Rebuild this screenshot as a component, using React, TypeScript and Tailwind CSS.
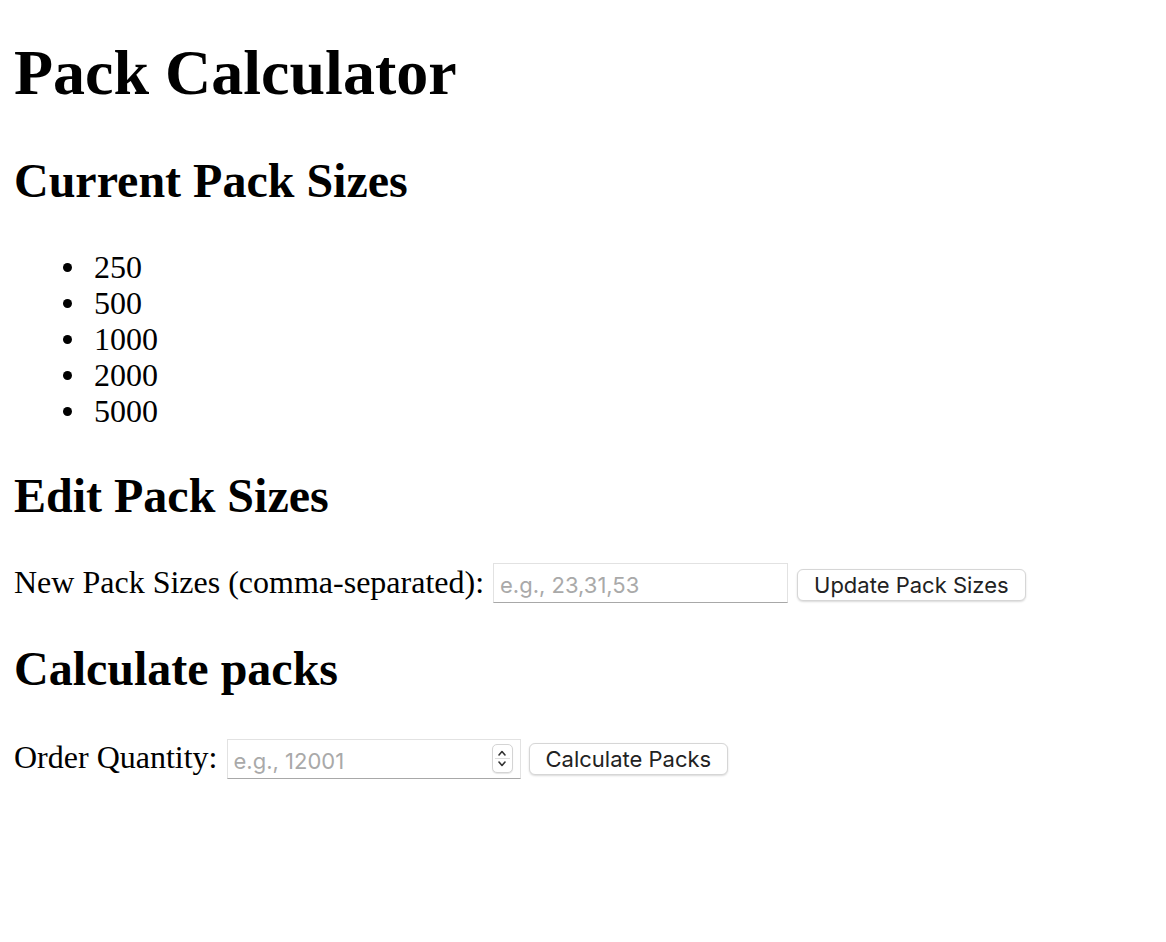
import React from "react";

const serif = { fontFamily: '"Liberation Serif", "Times New Roman", serif' };
const sans = { fontFamily: "Inter, 'Liberation Sans', sans-serif" };

function Spinner() {
  return (
    <div className="absolute right-[8px] top-[5px] flex h-[29px] w-[21px] flex-col items-center justify-center rounded-[5px] border border-[#d4d4d4] bg-white shadow-[0_1px_1px_rgba(0,0,0,0.1)]">
      <svg width="10" height="8" viewBox="0 0 10 8" className="mb-[1px]">
        <path d="M2 6 L5 2.5 L8 6" fill="none" stroke="#333" strokeWidth="1.6" strokeLinecap="round" strokeLinejoin="round" />
      </svg>
      <div className="h-px w-[15px] bg-[#ddd]" />
      <svg width="10" height="8" viewBox="0 0 10 8" className="mt-[1px]">
        <path d="M2 2 L5 5.5 L8 2" fill="none" stroke="#333" strokeWidth="1.6" strokeLinecap="round" strokeLinejoin="round" />
      </svg>
    </div>
  );
}

const btn =
  "h-[32px] rounded-[6px] border border-[#d6d6d6] bg-white px-[16px] text-[22px] leading-none text-[#222] shadow-[0_1px_2px_rgba(0,0,0,0.15)]";
const inp =
  "h-[40px] border border-[#e2e2e2] border-b-[#a8a8a8] bg-white px-[6px] pt-[4px] text-[22px] text-black outline-none placeholder:text-[#a9a9a9]";

const sizes = ["250", "500", "1000", "2000", "5000"];

export default function App() {
  return (
    <div className="min-h-[942px] bg-white px-[14px] pt-px text-black" style={serif}>
      <h1 className="mt-[35px] text-[64px] font-bold leading-[74px]">Pack Calculator</h1>
      <h2 className="mt-[43px] text-[48px] font-bold leading-[55px]">Current Pack Sizes</h2>
      <ul className="mt-[41px] pl-[80px] text-[32px] leading-[36px]">
        {sizes.map((s) => (
          <li key={s} className="-ml-[31px] flex items-center">
            <span className="mr-[22px] mt-[1px] h-[9px] w-[9px] rounded-full bg-black" />
            <span>{s}</span>
          </li>
        ))}
      </ul>
      <h2 className="mt-[39px] text-[48px] font-bold leading-[55px]">Edit Pack Sizes</h2>
      <div className="mt-[40px] flex items-start text-[32px] leading-[37px]">
        <span className="mt-[1px]">New Pack Sizes (comma-separated):</span>
        <input type="text" placeholder="e.g., 23,31,53" className={`ml-[9px] w-[295px] ${inp}`} style={sans} />
        <button className={`ml-[9px] mt-[6px] ${btn}`} style={sans}>
          Update Pack Sizes
        </button>
      </div>
      <h2 className="mt-[38px] text-[48px] font-bold leading-[55px]">Calculate packs</h2>
      <div className="mt-[43px] flex items-start text-[32px] leading-[37px]">
        <span>Order Quantity:</span>
        <div className="relative ml-[9px]">
          <input
            type="number"
            placeholder="e.g., 12001"
            className={`w-[294px] ${inp} [appearance:textfield] [&::-webkit-inner-spin-button]:appearance-none [&::-webkit-outer-spin-button]:appearance-none`}
            style={sans}
          />
          <Spinner />
        </div>
        <button className={`ml-[8px] mt-[4px] ${btn}`} style={sans}>
          Calculate Packs
        </button>
      </div>
    </div>
  );
}
